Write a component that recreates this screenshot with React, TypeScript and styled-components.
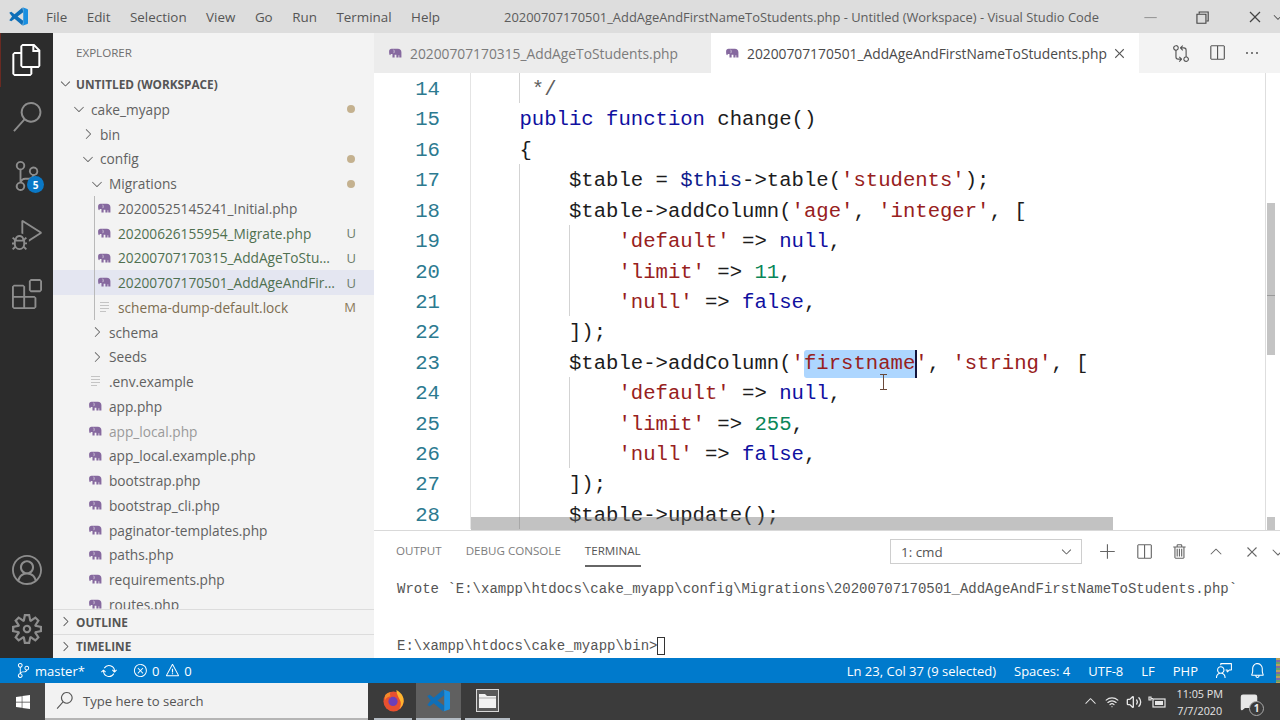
import React from 'react';
import styled, { createGlobalStyle } from 'styled-components';
import {
  VscFiles, VscSearch, VscSourceControl, VscDebugAlt, VscExtensions, VscAccount, VscSettingsGear,
  VscChevronRight, VscChevronDown, VscChevronUp, VscSync, VscError, VscWarning, VscFeedback, VscBell,
  VscAdd, VscSplitHorizontal, VscTrash, VscClose, VscGitCompare, VscEllipsis, VscChromeMinimize, VscChromeRestore,
} from 'react-icons/vsc';
import { FaWindows } from 'react-icons/fa';
import { Wifi, Volume2, MessageSquare } from 'lucide-react';

const UI_FONT = `"Open Sans", "Noto Sans", "Liberation Sans", sans-serif`;
const MONO_FONT = `"Liberation Mono", "DejaVu Sans Mono", monospace`;
const CELL = 12.372;

const GlobalStyle = createGlobalStyle`
  html, body { margin: 0; padding: 0; background: #fff; }
  * { box-sizing: border-box; }
`;

const Screen = styled.div`
  width: 1280px;
  height: 720px;
  overflow: hidden;
  display: flex;
  flex-direction: column;
  font-family: ${UI_FONT};
  position: relative;
`;

// =====================
// Title bar
// =====================

const TitleBar = styled.div`
  height: 33px;
  flex: none;
  background: #dddddd;
  display: flex;
  align-items: center;
  padding-left: 9px;
  color: #555;
  font-size: 13.4px;
`;

const Menu = styled.div`
  display: flex;
  gap: 19.5px;
  margin-left: 18px;
`;

const WindowTitle = styled.div`
  margin-left: 64px;
  white-space: nowrap;
  font-size: 12.9px;
  color: #5c5c5c;
`;

const WindowControls = styled.div`
  margin-left: auto;
  display: flex;
  align-items: center;
  gap: 34px;
  margin-right: -5px;
  color: #444;
  svg:first-child { color: #999; }
  svg:last-child { margin-left: -28px; }
`;

// =====================
// Main area
// =====================

const Main = styled.div`
  flex: 1;
  min-height: 0;
  display: flex;
`;

const ActivityBar = styled.div`
  width: 53px;
  flex: none;
  background: #2c2c2c;
  display: flex;
  flex-direction: column;
`;

const ActivityItem = styled.div<{ $active?: boolean }>`
  height: ${p => (p.$active ? 54 : 59)}px;
  flex: none;
  display: flex;
  align-items: center;
  justify-content: center;
  position: relative;
  color: ${p => (p.$active ? '#ffffff' : '#8d8d8d')};
  border-left: 1px solid ${p => (p.$active ? '#6a2a22' : 'transparent')};
  margin-right: 1px;
`;

const ActivityBottom = styled.div`
  margin-top: auto;
`;

const CountBadge = styled.span`
  position: absolute;
  left: 26px;
  top: 30px;
  width: 17px;
  height: 17px;
  border-radius: 50%;
  background: #0a78c6;
  color: #fff;
  font-size: 10px;
  font-weight: 700;
  display: flex;
  align-items: center;
  justify-content: center;
`;

const Sidebar = styled.div`
  width: 321px;
  flex: none;
  background: #f3f3f3;
  display: flex;
  flex-direction: column;
`;

const SidebarTitle = styled.div`
  height: 38px;
  flex: none;
  padding-left: 23px;
  display: flex;
  align-items: center;
  font-size: 11.6px;
  color: #6f6f6f;
`;

const WorkspaceHead = styled.div`
  height: 25px;
  flex: none;
  display: flex;
  align-items: center;
  gap: 3px;
  padding-left: 5px;
  font-size: 11.8px;
  font-weight: 700;
  color: #555;
`;

const Tree = styled.div`
  flex: 1;
  min-height: 0;
  padding-top: 1px;
  overflow: hidden;
`;

const TreeRow = styled.div<{ $textX: number; $active?: boolean }>`
  height: 24.75px;
  display: flex;
  align-items: center;
  padding-left: ${p => p.$textX - 75}px;
  padding-right: 18px;
  background: ${p => (p.$active ? '#e4e6f1' : 'transparent')};
  font-size: 13.7px;
`;

const IconSlot = styled.span<{ $folder?: boolean }>`
  width: 16px;
  flex: none;
  margin-left: ${p => (p.$folder ? 2 : 0)}px;
  margin-right: ${p => (p.$folder ? 4 : 6)}px;
  display: flex;
  justify-content: center;
  align-items: center;
  color: #666;
`;

const RowName = styled.span<{ $tone?: string }>`
  flex: 1;
  min-width: 0;
  white-space: nowrap;
  overflow: hidden;
  text-overflow: ellipsis;
  color: ${p => p.$tone || '#616161'};
`;

const Dot = styled.span`
  width: 8px;
  height: 8px;
  border-radius: 50%;
  background: #c4b18f;
  margin-right: 1px;
  flex: none;
`;

const StatusLetter = styled.span<{ $tone: string }>`
  width: 12px;
  text-align: right;
  margin-left: 6px;
  font-size: 13px;
  flex: none;
  color: ${p => p.$tone};
`;

const MigrationsGroup = styled.div`
  position: relative;
  &::before {
    content: '';
    position: absolute;
    left: 41px;
    top: 0;
    bottom: 0;
    width: 1px;
    background: #b9b9b9;
    z-index: 1;
  }
`;

const CollapsedSection = styled.div`
  height: 24.5px;
  flex: none;
  border-top: 1px solid #dcdcdc;
  display: flex;
  align-items: center;
  gap: 3px;
  padding-left: 5px;
  font-size: 11.8px;
  font-weight: 700;
  color: #555;
`;

// =====================
// Editor
// =====================

const EditorColumn = styled.div`
  flex: 1;
  min-width: 0;
  display: flex;
  flex-direction: column;
`;

const TabBar = styled.div`
  height: 40px;
  flex: none;
  background: #f3f3f3;
  display: flex;
`;

const Tab = styled.div<{ $active?: boolean; $width: number }>`
  width: ${p => p.$width}px;
  flex: none;
  display: flex;
  align-items: center;
  padding-left: 15px;
  font-size: 13.8px;
  white-space: nowrap;
  background: ${p => (p.$active ? '#ffffff' : '#ececec')};
  color: ${p => (p.$active ? '#4a4a4a' : '#7b7b7b')};
`;

const TabIcon = styled.span`
  width: 14px;
  margin-right: 7px;
  display: flex;
  flex: none;
`;

const TabClose = styled.span`
  margin-left: 4px;
  display: flex;
  color: #555;
`;

const TabActions = styled.div`
  display: flex;
  align-items: center;
  gap: 18px;
  margin-left: 33px;
  color: #555;
`;

const EditorPane = styled.div`
  flex: 1;
  min-height: 0;
  position: relative;
  overflow: hidden;
  background: #fff;
`;

const CodeRow = styled.div`
  height: 30.43px;
  display: flex;
  font-family: ${MONO_FONT};
  font-size: 20.62px;
  line-height: 34.2px;
  white-space: pre;
`;

const LineNumber = styled.div`
  width: 97px;
  flex: none;
  padding-right: 30px;
  text-align: right;
  color: #2c7a90;
  border-right: 1px solid #e4e4e4;
`;

const CodeText = styled.div<{ $guides: number[] }>`
  flex: 1;
  margin-left: -1px;
  background-repeat: no-repeat;
  background-image: ${p =>
    p.$guides.length ? p.$guides.map(() => 'linear-gradient(#d3d3d3, #d3d3d3)').join(', ') : 'none'};
  background-size: 1px 100%;
  background-position: ${p => p.$guides.map(c => `${c * CELL}px 0`).join(', ') || '0 0'};
`;

const tokenColors: Record<string, string> = {
  plain: '#1c1c1c',
  kw: '#10109f',
  str: '#972020',
  num: '#098658',
  navy: '#0d1a8c',
  com: '#5f5f5f',
};

const Tok = styled.span<{ $kind: string }>`
  color: ${p => tokenColors[p.$kind]};
`;

const SelectedTok = styled.span`
  color: #972020;
  display: inline-block;
  height: 28px;
  line-height: 28px;
  background: #add6ff;
  box-shadow: 2px 0 0 #14143c;
  border-radius: 3px 0 0 3px;
`;

const VerticalRuler = styled.div`
  position: absolute;
  right: 14px;
  top: 0;
  bottom: 0;
  width: 1px;
  background: #dedede;
`;

const VerticalThumb = styled.div`
  position: absolute;
  left: 893px;
  top: 130px;
  width: 8px;
  height: 152px;
  background: #c4c4c4;
  &::after {
    content: '';
    position: absolute;
    left: 0;
    right: 0;
    top: 92px;
    height: 1px;
    background: #9a9a9a;
  }
`;

const HorizontalThumb = styled.div`
  position: absolute;
  left: 97px;
  bottom: 0;
  width: 642px;
  height: 13px;
  background: rgba(110, 110, 110, 0.42);
`;

const HorizontalEnd = styled.div`
  position: absolute;
  left: 893px;
  bottom: 0;
  width: 8px;
  height: 13px;
  background: #c4c4c4;
`;

const MouseCursor = styled.svg`
  position: absolute;
  left: 505px;
  top: 301px;
`;

// =====================
// Panel
// =====================

const Panel = styled.div`
  height: 128px;
  flex: none;
  background: #fff;
  border-top: 1px solid #d9d9d9;
  display: flex;
  flex-direction: column;
`;

const PanelHead = styled.div`
  height: 49px;
  flex: none;
  display: flex;
  align-items: flex-start;
  padding-left: 22px;
`;

const PanelTabs = styled.div`
  display: flex;
  gap: 24px;
`;

const PanelTab = styled.div<{ $active?: boolean }>`
  height: 36px;
  padding-top: 12px;
  font-size: 11.6px;
  color: ${p => (p.$active ? '#555' : '#7d7d7d')};
  border-bottom: 2px solid ${p => (p.$active ? '#666' : 'transparent')};
`;

const TerminalSelect = styled.div`
  width: 192px;
  height: 25px;
  margin-top: 8px;
  margin-left: auto;
  border: 1px solid #cecece;
  display: flex;
  align-items: center;
  justify-content: space-between;
  padding: 0 7px 0 10px;
  font-size: 13.4px;
  color: #555;
`;

const PanelActions = styled.div`
  display: flex;
  align-items: center;
  height: 25px;
  margin-top: 8px;
  margin-left: 17px;
  margin-right: -7px;
  gap: 18px;
  color: #666;
  svg:last-child { margin-left: -10px; }
`;

const TerminalBody = styled.div`
  padding-left: 23px;
  font-family: ${MONO_FONT};
  font-size: 14px;
  line-height: 19px;
  color: #555;
  white-space: pre;
`;

const TermCursor = styled.span`
  display: inline-block;
  width: 8px;
  height: 18px;
  border: 1px solid #333;
  vertical-align: top;
`;

// =====================
// Status bar and taskbar
// =====================

const StatusBar = styled.div`
  height: 25px;
  flex: none;
  background: #007acc;
  color: #fff;
  display: flex;
  align-items: center;
  padding-left: 16px;
  font-size: 13px;
  position: relative;
  &::after {
    content: '';
    position: absolute;
    right: 0;
    top: 0;
    bottom: 0;
    width: 4px;
    background: repeating-linear-gradient(#b8a05a 0 2px, #7f6aa6 2px 4px, #6aa06a 4px 6px);
  }
`;

const StatusGroup = styled.div<{ $gap: number; $right?: boolean }>`
  display: flex;
  align-items: center;
  gap: ${p => p.$gap}px;
  margin-left: ${p => (p.$right ? 'auto' : '0')};
  margin-right: ${p => (p.$right ? '14px' : '0')};
`;

const StatusItem = styled.span`
  display: flex;
  align-items: center;
  gap: 4px;
  white-space: nowrap;
`;

const Taskbar = styled.div`
  height: 37px;
  flex: none;
  background: #3b3b3b;
  display: flex;
  align-items: stretch;
`;

const StartButton = styled.div`
  width: 45px;
  flex: none;
  background: #454545;
  color: #fff;
  display: flex;
  align-items: center;
  justify-content: center;
`;

const SearchBox = styled.div`
  width: 323px;
  flex: none;
  background: #f2f2f2;
  border-bottom: 2px solid #b5b5b5;
  display: flex;
  align-items: center;
  gap: 10px;
  padding-left: 11px;
  font-size: 13.1px;
  color: #555;
`;

const TaskApps = styled.div`
  display: flex;
  gap: 4px;
  margin-left: 6px;
`;

const TaskApp = styled.div<{ $open?: boolean; $width: number }>`
  width: ${p => p.$width}px;
  flex: none;
  display: flex;
  align-items: center;
  justify-content: center;
  background: ${p => (p.$open ? '#606060' : 'transparent')};
  border-bottom: 2px solid #b4bcc4;
`;

const Tray = styled.div`
  margin-left: auto;
  display: flex;
  align-items: center;
  color: #e6e6e6;
`;

const TrayIcons = styled.div`
  display: flex;
  align-items: center;
  gap: 6.5px;
`;

const Clock = styled.div`
  margin-left: 10px;
  font-size: 10.8px;
  line-height: 17px;
  text-align: center;
  color: #e4e4e4;
`;

const NoticeWrap = styled.div`
  position: relative;
  margin: 0 22px 0 17px;
  display: flex;
`;

const NoticeCount = styled.span`
  position: absolute;
  right: -6px;
  bottom: -5px;
  width: 15px;
  height: 15px;
  border-radius: 50%;
  background: #3b3b3b;
  border: 1px solid #aaa;
  font-size: 10px;
  font-weight: 700;
  color: #eee;
  display: flex;
  align-items: center;
  justify-content: center;
`;

// =====================
// Small drawings
// =====================

const Elephant = ({ size = 13 }: { size?: number }) => (
  <svg width={size} height={size * 0.8} viewBox="0 0 16 13" fill="#86699f">
    <path d="M3 1h8c2.6 0 4.4 1.6 4.4 4.2V12h-2.7V9h-.9v3H9.1V8.4H6.9V12H4.2V7.4c-1.5-.2-2.6.2-2.8 1.8C.4 8.4 0 7 0 5.2V4.1C0 2.1 1.2 1 3 1z" />
    <path d="M5.6 2.2c1 1.2 1 3 .2 4.2" stroke="#f3f3f3" strokeWidth=".8" fill="none" />
  </svg>
);

const LinesIcon = () => (
  <svg width="11" height="13" viewBox="0 0 11 13" stroke="#c4c4c4" strokeWidth="1.2">
    <path d="M1 1.5h9M1 4.5h9M1 7.5h9M1 10.5h6" />
  </svg>
);

const VsCodeLogo = ({ size }: { size: number }) => (
  <svg width={size} height={size} viewBox="0 0 24 24">
    <path fill="#0f6fb8" d="M17 .5 7 9.2 2.9 6 .3 7.3 3.9 12 .3 16.7 2.9 18 7 14.8 17 23.5 18 17.4 10.8 12 18 6.6z" />
    <path fill="#1a8fe0" d="M17 .4 23.2 2.6c.5.2.8.7.8 1.3v16.2c0 .6-.3 1.1-.8 1.3L17 23.6c.6-.4 1-1 1-1.7V2.1c0-.7-.4-1.3-1-1.7z" />
  </svg>
);

const FirefoxLogo = () => (
  <svg width="23" height="23" viewBox="0 0 24 24">
    <circle cx="12" cy="13" r="10.5" fill="#e8502f" />
    <path fill="#ffb52e" d="M15 1c5 2.5 8 7 7.6 12-.3 3.4-2.2 6-4.6 7.5 2-3 2.2-6.4.6-9.3C17.2 8.400 15 5 15 1z" />
    <circle cx="11.500" cy="13" r="4.800" fill="#6d3fb8" />
    <path fill="#f58a2a" d="M3 7c2-2.600 4-3.500 6-3.500C8 5 8 6.500 9 7.500 6.500 8 4 9 3 12z" />
  </svg>
);

const ExplorerLogo = () => (
  <svg width="23" height="23" viewBox="0 0 23 23">
    <rect x=".5" y=".5" width="22" height="22" fill="#5a5a5a" stroke="#d8d8d8" />
    <path fill="#f2f2f2" d="M3 5h6l2 2h9v12H3z" />
    <path fill="#cfcfcf" d="M3 8h17v2H3z" />
  </svg>
);

const BatteryPlug = () => (
  <svg width="18" height="14" viewBox="0 0 18 14" fill="none" stroke="#e6e6e6" strokeWidth="1.2">
    <rect x="5" y="4" width="12" height="8" />
    <rect x="7" y="6" width="8" height="4" fill="#e6e6e6" stroke="none" />
    <path d="M1 2h2v3H1zM3 3.500h2" />
  </svg>
);

// =====================
// Data
// =====================

type Token = [string, string];

const p = (t: string): Token => ['plain', t];
const s = (t: string): Token => ['str', t];
const k = (t: string): Token => ['kw', t];

const codeLines: { n: number; guides: number[]; tokens: Token[] }[] = [
  { n: 14, guides: [4], tokens: [['com', '     */']] },
  { n: 15, guides: [], tokens: [k('    public function'), p(' change()')] },
  { n: 16, guides: [], tokens: [p('    {')] },
  { n: 17, guides: [4], tokens: [p('        $table = '), ['navy', '$this'], p('->table('), s("'students'"), p(');')] },
  { n: 18, guides: [4], tokens: [p('        $table->addColumn('), s("'age'"), p(', '), s("'integer'"), p(', [')] },
  { n: 19, guides: [4, 8], tokens: [s("            'default'"), p(' => '), k('null'), p(',')] },
  { n: 20, guides: [4, 8], tokens: [s("            'limit'"), p(' => '), ['num', '11'], p(',')] },
  { n: 21, guides: [4, 8], tokens: [s("            'null'"), p(' => '), k('false'), p(',')] },
  { n: 22, guides: [4], tokens: [p('        ]);')] },
  { n: 23, guides: [4], tokens: [p('        $table->addColumn('), s("'"), ['sel', 'firstname'], s("'"), p(', '), s("'string'"), p(', [')] },
  { n: 24, guides: [4, 8], tokens: [s("            'default'"), p(' => '), k('null'), p(',')] },
  { n: 25, guides: [4, 8], tokens: [s("            'limit'"), p(' => '), ['num', '255'], p(',')] },
  { n: 26, guides: [4, 8], tokens: [s("            'null'"), p(' => '), k('false'), p(',')] },
  { n: 27, guides: [4], tokens: [p('        ]);')] },
  { n: 28, guides: [4], tokens: [p('        $table->update();')] },
];

const UNTRACKED = '#4f7050';
const UNTRACKED_MARK = '#6d7d6b';

const migrations = [
  { name: '20200525145241_Initial.php', tone: '#616161' },
  { name: '20200626155954_Migrate.php', tone: UNTRACKED, mark: 'U', markTone: UNTRACKED_MARK },
  { name: '20200707170315_AddAgeToStudents.php', tone: UNTRACKED, mark: 'U', markTone: UNTRACKED_MARK },
  { name: '20200707170501_AddAgeAndFirstNameToStudents.php', tone: UNTRACKED, mark: 'U', markTone: UNTRACKED_MARK, active: true },
];

const rootFiles = [
  { name: 'app.php' },
  { name: 'app_local.php', tone: '#9a9a9a' },
  { name: 'app_local.example.php' },
  { name: 'bootstrap.php' },
  { name: 'bootstrap_cli.php' },
  { name: 'paginator-templates.php' },
  { name: 'paths.php' },
  { name: 'requirements.php' },
  { name: 'routes.php' },
];

const FolderRow = ({ name, textX, open, dot }: { name: string; textX: number; open?: boolean; dot?: boolean }) => (
  <TreeRow $textX={textX}>
    <IconSlot $folder>{open ? <VscChevronDown size={16} /> : <VscChevronRight size={16} />}</IconSlot>
    <RowName>{name}</RowName>
    {dot && <Dot />}
  </TreeRow>
);

export default function App() {
  return (
    <>
      <GlobalStyle />
      <Screen>
        <TitleBar>
          <VsCodeLogo size={19} />
          <Menu>
            {['File', 'Edit', 'Selection', 'View', 'Go', 'Run', 'Terminal', 'Help'].map(m => (
              <span key={m}>{m}</span>
            ))}
          </Menu>
          <WindowTitle>20200707170501_AddAgeAndFirstNameToStudents.php - Untitled (Workspace) - Visual Studio Code</WindowTitle>
          <WindowControls>
            <VscChromeMinimize size={18} />
            <VscChromeRestore size={18} />
            <VscClose size={20} />
            <VscChevronDown size={14} />
          </WindowControls>
        </TitleBar>

        <Main>
          <ActivityBar>
            <ActivityItem $active><VscFiles size={32} /></ActivityItem>
            <ActivityItem><VscSearch size={30} /></ActivityItem>
            <ActivityItem><VscSourceControl size={30} /><CountBadge>5</CountBadge></ActivityItem>
            <ActivityItem><VscDebugAlt size={30} /></ActivityItem>
            <ActivityItem><VscExtensions size={30} /></ActivityItem>
            <ActivityBottom>
              <ActivityItem><VscAccount size={30} /></ActivityItem>
              <ActivityItem><VscSettingsGear size={30} /></ActivityItem>
            </ActivityBottom>
          </ActivityBar>

          <Sidebar>
            <SidebarTitle>EXPLORER</SidebarTitle>
            <WorkspaceHead><VscChevronDown size={15} />UNTITLED (WORKSPACE)</WorkspaceHead>
            <Tree>
              <FolderRow name="cake_myapp" textX={91} open dot />
              <FolderRow name="bin" textX={100} />
              <FolderRow name="config" textX={100} open dot />
              <FolderRow name="Migrations" textX={109} open dot />
              <MigrationsGroup>
                {migrations.map(f => (
                  <TreeRow key={f.name} $textX={118} $active={f.active}>
                    <IconSlot><Elephant /></IconSlot>
                    <RowName $tone={f.tone}>{f.name}</RowName>
                    {f.mark && <StatusLetter $tone={f.markTone!}>{f.mark}</StatusLetter>}
                  </TreeRow>
                ))}
                <TreeRow $textX={118}>
                  <IconSlot><LinesIcon /></IconSlot>
                  <RowName $tone="#7d6d50">schema-dump-default.lock</RowName>
                  <StatusLetter $tone="#8a7a5a">M</StatusLetter>
                </TreeRow>
              </MigrationsGroup>
              <FolderRow name="schema" textX={109} />
              <FolderRow name="Seeds" textX={109} />
              <TreeRow $textX={109}>
                <IconSlot><LinesIcon /></IconSlot>
                <RowName>.env.example</RowName>
              </TreeRow>
              {rootFiles.map(f => (
                <TreeRow key={f.name} $textX={109}>
                  <IconSlot><Elephant /></IconSlot>
                  <RowName $tone={f.tone}>{f.name}</RowName>
                </TreeRow>
              ))}
            </Tree>
            <CollapsedSection><VscChevronRight size={15} />OUTLINE</CollapsedSection>
            <CollapsedSection><VscChevronRight size={15} />TIMELINE</CollapsedSection>
          </Sidebar>

          <EditorColumn>
            <TabBar>
              <Tab $width={337}>
                <TabIcon><Elephant /></TabIcon>
                20200707170315_AddAgeToStudents.php
              </Tab>
              <Tab $active $width={428}>
                <TabIcon><Elephant /></TabIcon>
                20200707170501_AddAgeAndFirstNameToStudents.php
                <TabClose><VscClose size={17} /></TabClose>
              </Tab>
              <TabActions>
                <VscGitCompare size={18} />
                <VscSplitHorizontal size={18} />
                <VscEllipsis size={16} />
              </TabActions>
            </TabBar>

            <EditorPane>
              {codeLines.map(line => (
                <CodeRow key={line.n}>
                  <LineNumber>{line.n}</LineNumber>
                  <CodeText $guides={line.guides}>
                    {line.tokens.map(([kind, text], i) =>
                      kind === 'sel' ? (
                        <SelectedTok key={i}>{text}</SelectedTok>
                      ) : (
                        <Tok key={i} $kind={kind}>{text}</Tok>
                      ),
                    )}
                  </CodeText>
                </CodeRow>
              ))}
              <VerticalRuler />
              <VerticalThumb />
              <HorizontalThumb />
              <HorizontalEnd />
              <MouseCursor width="9" height="16" viewBox="0 0 9 16" stroke="#6b4a3a" fill="none">
                <path d="M1 .5h7M4.500.5v15M1 15.500h7" />
              </MouseCursor>
            </EditorPane>

            <Panel>
              <PanelHead>
                <PanelTabs>
                  <PanelTab>OUTPUT</PanelTab>
                  <PanelTab>DEBUG CONSOLE</PanelTab>
                  <PanelTab $active>TERMINAL</PanelTab>
                </PanelTabs>
                <TerminalSelect>
                  1: cmd
                  <VscChevronDown size={15} />
                </TerminalSelect>
                <PanelActions>
                  <VscAdd size={18} />
                  <VscSplitHorizontal size={18} />
                  <VscTrash size={18} />
                  <VscChevronUp size={18} />
                  <VscClose size={18} />
                  <VscChevronDown size={18} />
                </PanelActions>
              </PanelHead>
              <TerminalBody>
                {'Wrote `E:\\xampp\\htdocs\\cake_myapp\\config\\Migrations\\20200707170501_AddAgeAndFirstNameToStudents.php`\n\n\n'}
                {'E:\\xampp\\htdocs\\cake_myapp\\bin>'}
                <TermCursor />
              </TerminalBody>
            </Panel>
          </EditorColumn>
        </Main>

        <StatusBar>
          <StatusGroup $gap={16}>
            <StatusItem><VscSourceControl size={15} />master*</StatusItem>
            <VscSync size={16} />
            <StatusGroup $gap={6}>
              <StatusItem><VscError size={15} />0</StatusItem>
              <StatusItem><VscWarning size={15} />0</StatusItem>
            </StatusGroup>
          </StatusGroup>
          <StatusGroup $gap={18} $right>
            <StatusItem>Ln 23, Col 37 (9 selected)</StatusItem>
            <StatusItem>Spaces: 4</StatusItem>
            <StatusItem>UTF-8</StatusItem>
            <StatusItem>LF</StatusItem>
            <StatusItem>PHP</StatusItem>
            <StatusGroup $gap={16}>
              <VscFeedback size={17} />
              <VscBell size={17} />
            </StatusGroup>
          </StatusGroup>
        </StatusBar>

        <Taskbar>
          <StartButton><FaWindows size={16} /></StartButton>
          <SearchBox>
            <VscSearch size={17} />
            Type here to search
          </SearchBox>
          <TaskApps>
            <TaskApp $width={38}><FirefoxLogo /></TaskApp>
            <TaskApp $open $width={45}><VsCodeLogo size={23} /></TaskApp>
            <TaskApp $width={45}><ExplorerLogo /></TaskApp>
          </TaskApps>
          <Tray>
            <TrayIcons>
              <VscChevronUp size={17} />
              <Wifi size={14} />
              <Volume2 size={16} />
              <BatteryPlug />
            </TrayIcons>
            <Clock>11:05 PM<br />7/7/2020</Clock>
            <NoticeWrap>
              <MessageSquare size={18} fill="#e8e8e8" />
              <NoticeCount>1</NoticeCount>
            </NoticeWrap>
          </Tray>
        </Taskbar>
      </Screen>
    </>
  );
}
